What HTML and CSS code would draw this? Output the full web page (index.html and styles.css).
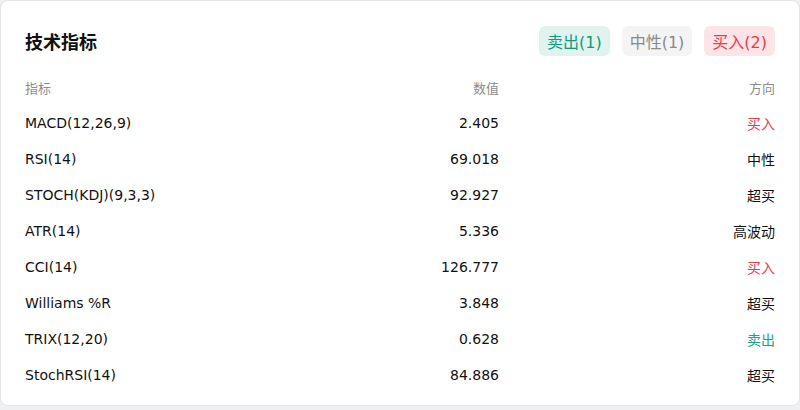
FILE: index.html
```html
<!DOCTYPE html>
<html lang="zh">
<head>
<meta charset="utf-8">
<link rel="stylesheet" href="styles.css">
</head>
<body>
<div class="card">
  <div class="head">
    <h2 class="title">技术指标</h2>
    <div class="badges">
      <span class="badge sell">卖出(1)</span>
      <span class="badge neutral">中性(1)</span>
      <span class="badge buy">买入(2)</span>
    </div>
  </div>
  <div class="table">
    <div class="row th"><span>指标</span><span class="num">数值</span><span class="dir">方向</span></div>
    <div class="row"><span>MACD(12,26,9)</span><span class="num">2.405</span><span class="dir up">买入</span></div>
    <div class="row"><span>RSI(14)</span><span class="num">69.018</span><span class="dir">中性</span></div>
    <div class="row"><span>STOCH(KDJ)(9,3,3)</span><span class="num">92.927</span><span class="dir">超买</span></div>
    <div class="row"><span>ATR(14)</span><span class="num">5.336</span><span class="dir">高波动</span></div>
    <div class="row"><span>CCI(14)</span><span class="num">126.777</span><span class="dir up">买入</span></div>
    <div class="row"><span>Williams %R</span><span class="num">3.848</span><span class="dir">超买</span></div>
    <div class="row"><span>TRIX(12,20)</span><span class="num">0.628</span><span class="dir down">卖出</span></div>
    <div class="row"><span>StochRSI(14)</span><span class="num">84.886</span><span class="dir">超买</span></div>
  </div>
</div>
</body>
</html>
```
FILE: styles.css
```css
html, body {
  margin: 0;
  padding: 0;
  background: #eef0f4;
  font-family: "DejaVu Sans", "Noto Sans CJK SC", sans-serif;
  color: #111;
}
.card {
  box-sizing: border-box;
  width: 800px;
  height: 406px;
  background: #fff;
  border: 1px solid #e2e4ea;
  border-radius: 8px;
  padding: 25px 24px 12px 24px;
}
.head {
  display: flex;
  align-items: center;
  justify-content: space-between;
  height: 30px;
}
.title {
  margin: 0;
  font-size: 18px;
  font-weight: bold;
  color: #111;
}
.badges {
  display: flex;
  gap: 12px;
}
.badge {
  display: flex;
  align-items: center;
  height: 30px;
  padding: 0 8px;
  border-radius: 6px;
  font-size: 16px;
}
.badge.sell { background: #e1f3ef; color: #0f9a7c; }
.badge.neutral { background: #f4f4f5; color: #8a8a8a; }
.badge.buy { background: #fde5e7; color: #f2384b; }
.table {
  margin-top: 13px;
}
.row {
  display: grid;
  grid-template-columns: 1fr 180px 276px;
  align-items: center;
  height: 36px;
  font-size: 14px;
  color: #111;
}
.row.th {
  font-size: 13px;
  color: #8c8c8c;
}
.num, .dir { text-align: right; }
.dir.up { color: #f2384b; }
.dir.down { color: #13a487; }
```
